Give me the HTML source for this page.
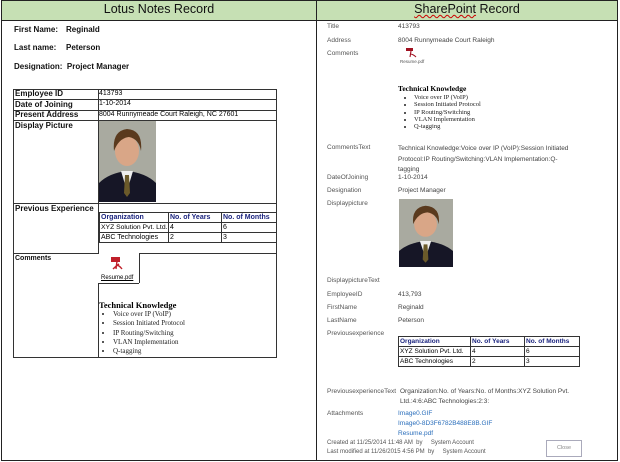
<!DOCTYPE html>
<html><head><meta charset="utf-8"><style>
*{margin:0;padding:0;box-sizing:border-box}
body{width:620px;height:462px;background:#fff;position:relative;overflow:hidden;font-family:"Liberation Sans",Arial,sans-serif}
.a{position:absolute;white-space:nowrap}
.b{font-weight:bold;font-size:8px;color:#111}
.l{font-size:6.5px;color:#555}
.v{font-size:6.5px;color:#444}
.lk{font-size:6.5px;color:#2a6ebb}
table{border-collapse:collapse;position:absolute;table-layout:fixed}
td{border:1px solid #333;font-size:7px;padding:0 1px;height:10px;line-height:9px;vertical-align:top;white-space:nowrap;overflow:hidden}
.ser{font-family:"Liberation Serif",serif}
ul{list-style:disc}
</style></head><body>
<div class="a" style="left:1px;top:0;width:617px;height:461px;border:1px solid #222"></div>
<div class="a" style="left:2px;top:1px;width:615px;height:20px;background:#c6e0b4;border-bottom:1px solid #222"></div>
<div class="a" style="left:316px;top:0;width:1px;height:461px;background:#222"></div>
<div class="a" style="left:2px;top:2px;width:314px;text-align:center;font-size:12.5px;color:#111">Lotus Notes Record</div>
<div class="a" style="left:317px;top:2px;width:300px;text-align:center;font-size:12.5px;color:#111"><span style="text-decoration:underline wavy #c00;text-decoration-thickness:1px">SharePoint</span> Record</div>

<div class="a b" style="left:14px;top:25px">First Name:</div><div class="a b" style="left:66px;top:25px">Reginald</div>
<div class="a b" style="left:14px;top:43px">Last name:</div><div class="a b" style="left:66px;top:43px">Peterson</div>
<div class="a b" style="left:14px;top:62px">Designation:&nbsp; Project Manager</div>

<div class="a" style="left:13px;top:89px;width:264px;height:269px;border:1px solid #333"></div>
<div class="a" style="left:98px;top:89px;width:1px;height:164px;background:#333"></div>
<div class="a" style="left:13px;top:99px;width:264px;height:1px;background:#333"></div>
<div class="a" style="left:13px;top:110px;width:264px;height:1px;background:#333"></div>
<div class="a" style="left:13px;top:120px;width:264px;height:1px;background:#333"></div>
<div class="a" style="left:13px;top:203px;width:264px;height:1px;background:#333"></div>
<div class="a" style="left:13px;top:253px;width:86px;height:1px;background:#333"></div>
<div class="a" style="left:139px;top:253px;width:138px;height:1px;background:#333"></div>
<div class="a" style="left:98px;top:283px;width:1px;height:75px;background:#333"></div>
<div class="a" style="left:139px;top:253px;width:1px;height:30px;background:#333"></div>
<div class="a" style="left:98px;top:283px;width:41px;height:1px;background:#333"></div>
<div class="a b" style="left:15px;top:89px;font-size:8px">Employee ID</div>
<div class="a b" style="left:15px;top:100px">Date of Joining</div>
<div class="a b" style="left:15px;top:110px">Present Address</div>
<div class="a b" style="left:15px;top:121px">Display Picture</div>
<div class="a b" style="left:15px;top:204px">Previous Experience</div>
<div class="a b" style="left:15px;top:255px;font-size:7px">Comments</div>
<div class="a" style="left:99px;top:90px;font-size:7px">413793</div>
<div class="a" style="left:99px;top:100px;font-size:7px">1-10-2014</div>
<div class="a" style="left:99px;top:111px;font-size:7px">8004 Runnymeade Court Raleigh, NC 27601</div>

<svg class="a" style="left:99px;top:121px" width="57" height="81" viewBox="0 0 57 81">
<rect width="57" height="81" fill="#a9aaa0"/>
<path d="M0 81 L0 62 Q10 52 28 50 Q47 52 57 62 L57 81Z" fill="#161626"/>
<path d="M22 50 L28 70 L34 50Z" fill="#eee"/>
<path d="M26 54 L30 54 L31 72 L28 76 L25 72Z" fill="#6b5a2a"/>
<ellipse cx="28" cy="30" rx="12" ry="15" fill="#d9a687"/>
<path d="M15 30 Q13 10 28 8 Q44 9 42 30 Q40 18 30 16 Q20 17 15 30Z" fill="#5a3a1e"/>
</svg>

<table style="left:99px;top:212px;width:178px">
<col style="width:69px"><col style="width:53px"><col>
<tr><td style="color:#1a237e;font-weight:bold">Organization</td><td style="color:#1a237e;font-weight:bold">No. of Years</td><td style="color:#1a237e;font-weight:bold">No. of Months</td></tr>
<tr><td style="font-size:6.8px">XYZ Solution Pvt. Ltd.</td><td>4</td><td>6</td></tr>
<tr><td>ABC Technologies</td><td>2</td><td>3</td></tr>
</table>

<svg class="a" style="left:110px;top:256px" width="16" height="16" viewBox="0 0 16 16"><rect x="1" y="1" width="9" height="5" fill="#c0202a"/><path d="M7 5 L6 13 M6 9 Q9 9 12 13 M3 13 Q6 10 9 8" stroke="#c0202a" stroke-width="1.4" fill="none"/></svg>
<div class="a" style="left:101px;top:275px;font-size:6px;text-decoration:underline">Resume.pdf</div>
<div class="a ser" style="left:99px;top:300px;font-size:8.5px;font-weight:bold">Technical Knowledge</div>
<ul class="a ser" style="left:113px;top:310px;font-size:7px;line-height:9.3px;color:#222">
<li>Voice over IP (VoIP)</li><li>Session Initiated Protocol</li><li>IP Routing/Switching</li><li>VLAN Implementation</li><li>Q-tagging</li></ul>

<!-- right -->
<div class="a l" style="left:327px;top:23px">Title</div><div class="a v" style="left:398px;top:23px">413793</div>
<div class="a l" style="left:327px;top:37px">Address</div><div class="a v" style="left:398px;top:37px">8004 Runnymeade Court Raleigh</div>
<div class="a l" style="left:327px;top:50px">Comments</div>
<svg class="a" style="left:406px;top:48px" width="12" height="11" viewBox="0 0 12 11"><rect x="0" y="0" width="7" height="3" fill="#a01020"/><path d="M5 3 L4 9 M4 6 Q7 6 10 9" stroke="#a01020" stroke-width="1.1" fill="none"/></svg>
<div class="a" style="left:400px;top:59px;font-size:4.5px;color:#555">Resume.pdf</div>
<div class="a ser" style="left:398px;top:84px;font-size:7.5px;font-weight:bold">Technical Knowledge</div>
<ul class="a ser" style="left:405px;top:94px;font-size:6.5px;line-height:7.3px;color:#222;padding-left:9px">
<li>Voice over IP (VoIP)</li><li>Session Initiated Protocol</li><li>IP Routing/Switching</li><li>VLAN Implementation</li><li>Q-tagging</li></ul>
<div class="a l" style="left:327px;top:144px">CommentsText</div>
<div class="a v" style="left:398px;top:144px;line-height:10.5px;white-space:normal;width:180px">Technical Knowledge:Voice over IP (VoIP):Session Initiated Protocol:IP Routing/Switching:VLAN Implementation:Q-tagging</div>
<div class="a l" style="left:327px;top:174px">DateOfJoining</div><div class="a v" style="left:398px;top:174px">1-10-2014</div>
<div class="a l" style="left:327px;top:187px">Designation</div><div class="a v" style="left:398px;top:187px">Project Manager</div>
<div class="a l" style="left:327px;top:200px">Displaypicture</div>
<svg class="a" style="left:399px;top:199px" width="54" height="68" viewBox="0 0 57 81" preserveAspectRatio="none">
<rect width="57" height="81" fill="#a9aaa0"/>
<path d="M0 81 L0 62 Q10 52 28 50 Q47 52 57 62 L57 81Z" fill="#161626"/>
<path d="M22 50 L28 70 L34 50Z" fill="#eee"/>
<path d="M26 54 L30 54 L31 72 L28 76 L25 72Z" fill="#6b5a2a"/>
<ellipse cx="28" cy="30" rx="12" ry="15" fill="#d9a687"/>
<path d="M15 30 Q13 10 28 8 Q44 9 42 30 Q40 18 30 16 Q20 17 15 30Z" fill="#5a3a1e"/>
</svg>
<div class="a l" style="left:327px;top:277px">DisplaypictureText</div>
<div class="a l" style="left:327px;top:291px">EmployeeID</div><div class="a v" style="left:398px;top:291px">413,793</div>
<div class="a l" style="left:327px;top:304px">FirstName</div><div class="a v" style="left:398px;top:304px">Reginald</div>
<div class="a l" style="left:327px;top:317px">LastName</div><div class="a v" style="left:398px;top:317px">Peterson</div>
<div class="a l" style="left:327px;top:330px">Previousexperience</div>
<table style="left:398px;top:336px;width:182px">
<col style="width:72px"><col style="width:54px"><col>
<tr><td style="font-size:6.5px;font-weight:bold;color:#1a237e">Organization</td><td style="font-size:6.5px;font-weight:bold;color:#1a237e">No. of Years</td><td style="font-size:6.5px;font-weight:bold;color:#1a237e">No. of Months</td></tr>
<tr><td style="font-size:6.5px">XYZ Solution Pvt. Ltd.</td><td style="font-size:6.5px">4</td><td style="font-size:6.5px">6</td></tr>
<tr><td style="font-size:6.5px">ABC Technologies</td><td style="font-size:6.5px">2</td><td style="font-size:6.5px">3</td></tr>
</table>
<div class="a l" style="left:327px;top:388px">PreviousexperienceText</div>
<div class="a v" style="left:400px;top:388px">Organization:No. of Years:No. of Months:XYZ Solution Pvt.</div>
<div class="a v" style="left:400px;top:398px">Ltd.:4:6:ABC Technologies:2:3:</div>
<div class="a l" style="left:327px;top:410px">Attachments</div>
<div class="a lk" style="left:398px;top:410px">Image0.GIF</div>
<div class="a lk" style="left:398px;top:420px">Image0-8D3F6782B488E8B.GIF</div>
<div class="a lk" style="left:398px;top:430px">Resume.pdf</div>
<div class="a l" style="left:327px;top:440px;font-size:6px">Created at 11/25/2014 11:48 AM &nbsp;by &nbsp;&nbsp;&nbsp;&nbsp;System Account</div>
<div class="a l" style="left:327px;top:449px;font-size:6px">Last modified at 11/26/2015 4:56 PM &nbsp;by &nbsp;&nbsp;&nbsp;&nbsp;System Account</div>
<div class="a" style="left:546px;top:440px;width:36px;height:17px;border:1px solid #aab;font-size:5.5px;color:#888;text-align:center;line-height:15px">Close</div>
</body></html>
